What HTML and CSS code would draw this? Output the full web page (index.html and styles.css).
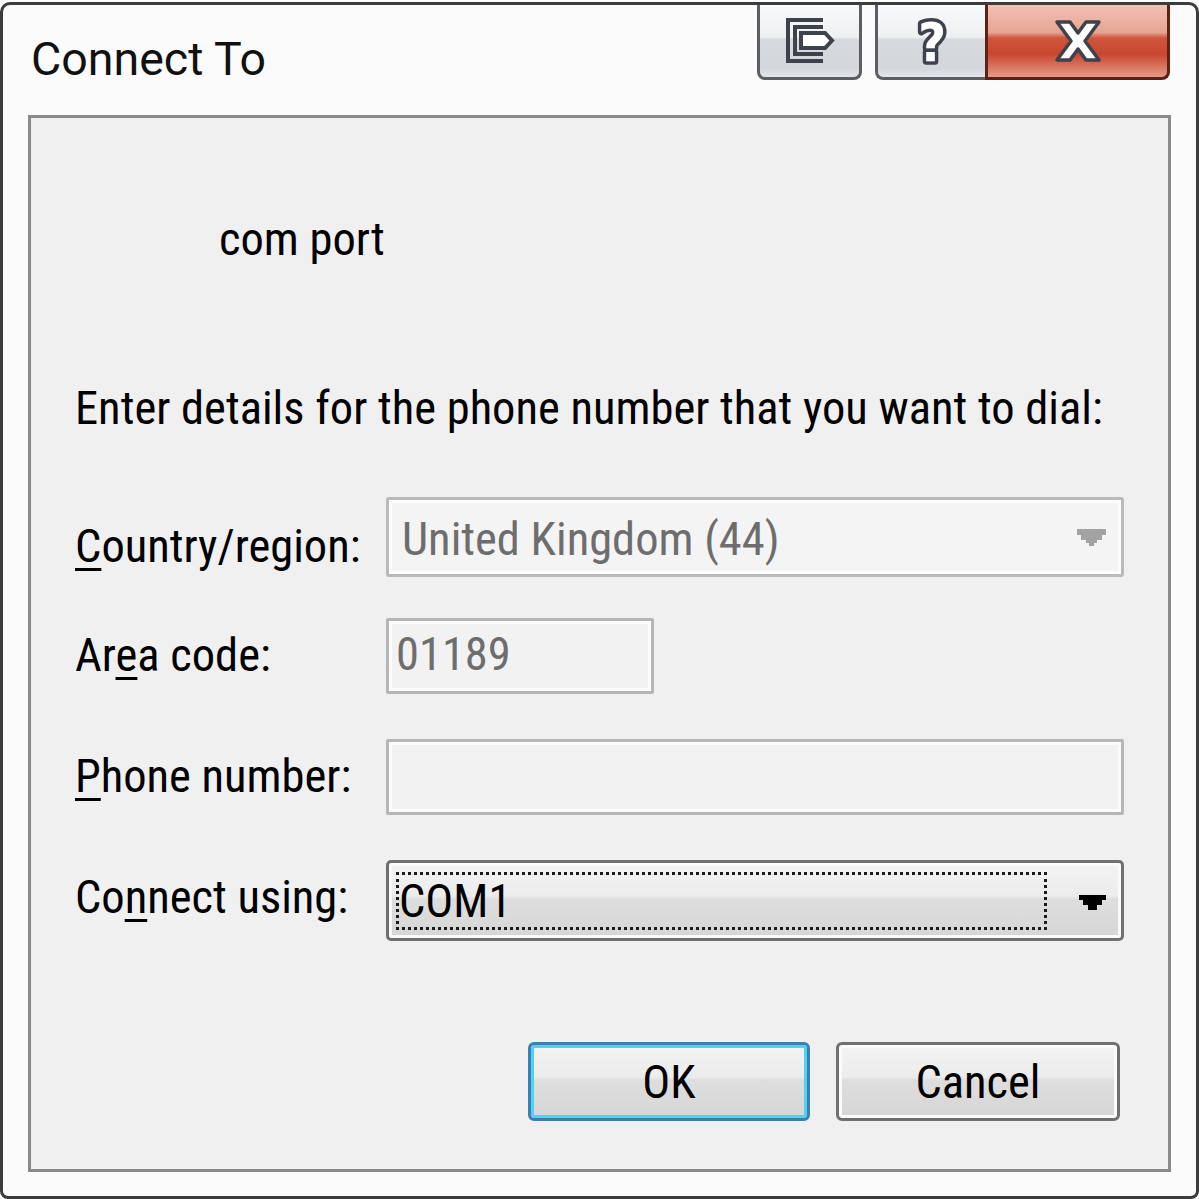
FILE: index.html
```html
<!DOCTYPE html>
<html lang="en">
<head>
    <meta charset="UTF-8">
    <meta name="viewport" content="width=device-width, initial-scale=1.0">
    <title>Connect To</title>
    <link rel="stylesheet" href="styles.css">
</head>
<body>
    <div class="window">
        <div class="titlebar">
            <div class="title">Connect To</div>
            <div class="caption-buttons">
                <div class="cap cap-ctx">
                    <svg width="50" height="46" viewBox="0 0 50 46">
                        <path d="M38 2 H3 V43 H38" fill="none" stroke="#3d424d" stroke-width="4"/>
                        <path d="M38 9 H10 V36 H38" fill="none" stroke="#3d424d" stroke-width="4"/>
                        <path d="M16 15 H40 L47 22.5 L40 30 H16 Z" fill="#fff" stroke="#3d424d" stroke-width="4" stroke-linejoin="miter"/>
                    </svg>
                </div>
                <div class="cap cap-help">
                    <svg width="44" height="70" viewBox="0 0 44 70">
                        <text x="22" y="55" text-anchor="middle" class="help-glyph">?</text>
                    </svg>
                </div>
                <div class="cap cap-close">
                    <svg width="48" height="44" viewBox="0 0 48 44">
                        <polygon points="3,3 16,3 24,14 32,3 45,3 31,22 45,41 32,41 24,30 16,41 3,41 17,22" fill="#fff" stroke="#3d424d" stroke-width="3.5" stroke-linejoin="round"/>
                    </svg>
                </div>
            </div>
        </div>

        <div class="panel">
            <div class="conn-name">com port</div>
            <p class="intro">Enter details for the phone number that you want to dial:</p>

            <div class="form">
                <label class="lbl lbl-country"><u>C</u>ountry/region:</label>
                <div class="combo combo-disabled">
                    <span>United Kingdom (44)</span>
                    <svg class="arrow" width="29" height="17" viewBox="0 0 29 17">
                        <polygon points="0,0 29,0 29,6 25,6 25,11 20,11 20,14 17,14 17,17 12,17 12,14 9,14 9,11 4,11 4,6 0,6" fill="#a3a3a3"/>
                    </svg>
                </div>

                <label class="lbl">Ar<u>e</u>a code:</label>
                <div class="field field-short field-disabled">01189</div>

                <label class="lbl"><u>P</u>hone number:</label>
                <div class="field"></div>

                <label class="lbl">Co<u>n</u>nect using:</label>
                <div class="combo combo-active">
                    <div class="focus">COM1</div>
                    <svg class="arrow" width="27" height="15" viewBox="0 0 27 15">
                        <polygon points="0,0 27,0 27,5 23,5 23,10 18,10 18,15 9,15 9,10 4,10 4,5 0,5" fill="#000"/>
                    </svg>
                </div>
            </div>

            <div class="actions">
                <div class="btn btn-default">OK</div>
                <div class="btn">Cancel</div>
            </div>
        </div>
    </div>
</body>
</html>
```
FILE: styles.css
```css
body {
    margin: 0;
    background-color: #ffffff;
    font-family: "Roboto", sans-serif;
    font-stretch: condensed;
    font-size: 46.5px;
    line-height: 56px;
    color: #000;
}
.window {
    box-sizing: border-box;
    width: 1199px;
    height: 1197px;
    margin-top: 2px;
    border: 3px solid #3c3c3c;
    border-radius: 10px 10px 8px 8px;
    background-color: #fbfbfb;
    display: flex;
    flex-direction: column;
}
.titlebar {
    height: 110px;
    display: flex;
    justify-content: space-between;
    align-items: flex-start;
    padding: 0 26px 0 28px;
}
.title {
    margin-top: 26px;
    font-stretch: normal;
    color: #111;
}
.caption-buttons {
    display: flex;
    height: 75px;
}
.cap {
    box-sizing: border-box;
    height: 75px;
    display: flex;
    align-items: center;
    justify-content: center;
    border: 3px solid #5c5e63;
    border-top: none;
    border-radius: 0 0 8px 8px;
    background: linear-gradient(#f8f9fa 0%, #eef0f2 44%, #d6d9de 48%, #d3d6db 88%, #e4e6e9 100%);
}
.cap-ctx {
    width: 105px;
    margin-right: 13px;
}
.cap-help {
    width: 110px;
    border-right: none;
    border-radius: 0 0 0 8px;
}
.cap-close {
    width: 185px;
    border-color: #5e2118;
    border-radius: 0 0 8px 0;
    background: linear-gradient(#f3c0b3 0%, #e6a593 38%, #d0553c 46%, #c9462f 68%, #e69a85 100%);
}
.help-glyph {
    font-family: "DejaVu Sans", sans-serif;
    font-weight: bold;
    font-size: 54px;
    fill: #fff;
    stroke: #3d424d;
    stroke-width: 7px;
    stroke-linejoin: round;
    paint-order: stroke;
}
.panel {
    flex: 1;
    margin: 0 25px 24px 25px;
    padding: 93px 48px 0 44px;
    border: 3px solid #8a8a8a;
    background-color: #f0f0f0;
}
.conn-name {
    margin-left: 144px;
}
.intro {
    margin: 113px 0 0 0;
}
.form {
    margin-top: 61px;
    display: grid;
    grid-template-columns: 311px 738px;
    grid-auto-rows: 80px;
    row-gap: 41px;
}
.lbl {
    align-self: start;
    margin-top: 9px;
    white-space: nowrap;
}
.lbl-country {
    margin-top: 21px;
}
u {
    text-decoration-thickness: 3px;
    text-underline-offset: 6px;
}
.combo {
    box-sizing: border-box;
    display: flex;
    align-items: flex-start;
    align-self: start;
}
.combo-disabled {
    height: 80px;
    padding: 11px 15px 0 13px;
    border: 3px solid #bababa;
    border-radius: 3px;
    box-shadow: inset 0 0 0 3px #fcfcfc;
    background-color: #f4f4f4;
    color: #6d6d6d;
}
.combo-disabled .arrow {
    margin-left: auto;
    margin-top: 18px;
}
.combo-active {
    height: 81px;
    padding: 9px 15px 0 7px;
    border: 3px solid #707070;
    border-radius: 5px;
    box-shadow: inset 0 0 0 3px #fafafa;
    background: linear-gradient(#f3f3f3 0%, #ececec 44%, #dedede 48%, #d6d6d6 100%);
}
.combo-active .arrow {
    margin-left: auto;
    margin-top: 23px;
}
.focus {
    width: 651px;
    height: 58px;
    box-sizing: border-box;
    border: 3px dotted #1a1a1a;
    line-height: 52px;
}
.field {
    box-sizing: border-box;
    height: 76px;
    align-self: start;
    padding: 5px 7px 0 7px;
    border: 3px solid #b6b6b6;
    border-radius: 2px;
    box-shadow: inset 0 0 0 3px #fbfbfb;
    background-color: #f2f2f2;
}
.field-short {
    width: 268px;
}
.field-disabled {
    color: #6d6d6d;
}
.actions {
    margin-top: 102px;
    display: flex;
    justify-content: flex-end;
    gap: 26px;
}
.btn {
    box-sizing: border-box;
    width: 284px;
    height: 79px;
    display: flex;
    align-items: center;
    justify-content: center;
    border: 3px solid #707070;
    border-radius: 6px;
    box-shadow: inset 0 0 0 3px #fbfbfb;
    background: linear-gradient(#f3f3f3 0%, #ececec 44%, #dedede 48%, #d6d6d6 100%);
}
.btn-default {
    width: 282px;
    border-color: #3c7fb1;
    box-shadow: inset 0 0 0 3px #4cd3f5;
}
```
